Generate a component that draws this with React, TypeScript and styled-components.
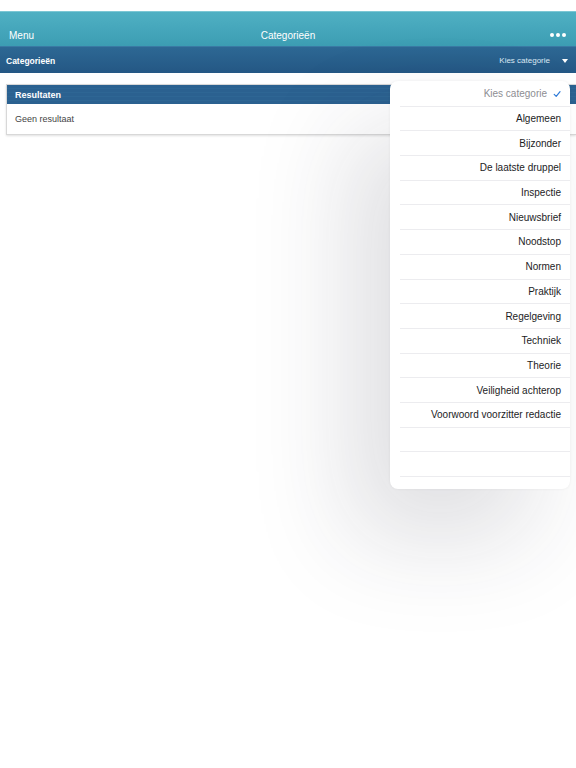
import React from 'react';
import styled, { createGlobalStyle } from 'styled-components';

const categories = [
  'Algemeen',
  'Bijzonder',
  'De laatste druppel',
  'Inspectie',
  'Nieuwsbrief',
  'Noodstop',
  'Normen',
  'Praktijk',
  'Regelgeving',
  'Techniek',
  'Theorie',
  'Veiligheid achterop',
  'Voorwoord voorzitter redactie',
  '',
  '',
  '',
];

const GlobalStyle = createGlobalStyle`
  html, body {
    margin: 0;
    padding: 0;
    background: #fff;
  }
  body {
    font-family: 'Liberation Sans', Arial, sans-serif;
    -webkit-font-smoothing: antialiased;
  }
`;

const Screen = styled.div`
  position: relative;
  width: 576px;
  height: 768px;
  overflow: hidden;
  background: #fff;
  padding-top: 11px;
  box-sizing: border-box;
`;

const NavBar = styled.div`
  height: 35px;
  display: grid;
  grid-template-columns: 1fr auto 1fr;
  align-items: center;
  padding: 12px 9px 0;
  color: #fff;
  font-size: 10px;
  background: linear-gradient(#4fb0c3, #3c9db3);
  border-top: 1px solid #7cc7d4;
  box-sizing: border-box;
`;

const NavRight = styled.div`
  justify-self: end;
  display: flex;
  gap: 2px;
  padding-right: 1px;
`;

const Dot = styled.span`
  width: 4px;
  height: 4px;
  border-radius: 50%;
  background: #fff;
`;

const SubBar = styled.div`
  height: 27px;
  display: flex;
  align-items: center;
  justify-content: space-between;
  padding: 1px 8px 0 6px;
  background: linear-gradient(#2d6894, #245784);
  border-top: 1px solid #3a7aa4;
  box-sizing: border-box;
  color: #fff;
`;

const SubTitle = styled.span`
  font-size: 8.5px;
  font-weight: bold;
`;

const Picker = styled.span`
  display: flex;
  align-items: center;
  gap: 12px;
  font-size: 8px;
  color: #dce9f3;
`;

const Caret = styled.span`
  width: 0;
  height: 0;
  border-left: 3px solid transparent;
  border-right: 3px solid transparent;
  border-top: 4px solid #fff;
`;

const Content = styled.div`
  padding: 11px 0 0 6px;
`;

const Panel = styled.div`
  border: 1px solid #d8d8d8;
  border-right: none;
  background: #fff;
  box-shadow: 0 1px 2px rgba(0, 0, 0, 0.12);
`;

const PanelHead = styled.div`
  height: 19px;
  display: flex;
  align-items: center;
  padding-left: 8px;
  font-size: 9px;
  font-weight: bold;
  color: #fff;
  background: repeating-linear-gradient(
      #2b6190 0px,
      #2b6190 3px,
      #2e6694 3px,
      #2e6694 4px
    );
`;

const PanelBody = styled.div`
  height: 30px;
  display: flex;
  align-items: center;
  padding-left: 8px;
  font-size: 9px;
  color: #444;
`;

const Popover = styled.div`
  position: absolute;
  left: 390px;
  top: 81px;
  width: 180px;
  height: 408px;
  padding-top: 1px;
  box-sizing: border-box;
  background: #fff;
  border-radius: 8px;
  overflow: hidden;
  box-shadow: -40px 50px 100px rgba(40, 40, 60, 0.15),
    0 0 3px rgba(0, 0, 0, 0.06);
`;

const Arrow = styled.div`
  position: absolute;
  left: 500px;
  top: 74px;
  width: 0;
  height: 0;
  border-left: 7px solid transparent;
  border-right: 7px solid transparent;
  border-bottom: 7px solid #fff;
`;

const Option = styled.div<{ muted?: boolean }>`
  height: 24.7px;
  margin-left: 10px;
  padding-right: 9px;
  display: flex;
  align-items: center;
  justify-content: flex-end;
  gap: 6px;
  font-size: 10px;
  color: ${(p) => (p.muted ? '#8d8d92' : '#1c1c1e')};
  border-bottom: 1px solid #ececef;
  box-sizing: border-box;
`;

const Check = styled.svg`
  width: 8px;
  height: 8px;
`;

export default function App() {
  return (
    <Screen>
      <GlobalStyle />
      <NavBar>
        <span>Menu</span>
        <span>Categorieën</span>
        <NavRight>
          <Dot />
          <Dot />
          <Dot />
        </NavRight>
      </NavBar>
      <SubBar>
        <SubTitle>Categorieën</SubTitle>
        <Picker>
          Kies categorie
          <Caret />
        </Picker>
      </SubBar>
      <Content>
        <Panel>
          <PanelHead>Resultaten</PanelHead>
          <PanelBody>Geen resultaat</PanelBody>
        </Panel>
      </Content>
      <Arrow />
      <Popover>
        <Option muted>
          Kies categorie
          <Check viewBox="0 0 10 10">
            <path
              d="M1.5 5.5 L4 8 L8.8 2"
              fill="none"
              stroke="#2f7bd8"
              strokeWidth="1.5"
              strokeLinecap="round"
              strokeLinejoin="round"
            />
          </Check>
        </Option>
        {categories.map((c, i) => (
          <Option key={i}>{c}</Option>
        ))}
      </Popover>
    </Screen>
  );
}
